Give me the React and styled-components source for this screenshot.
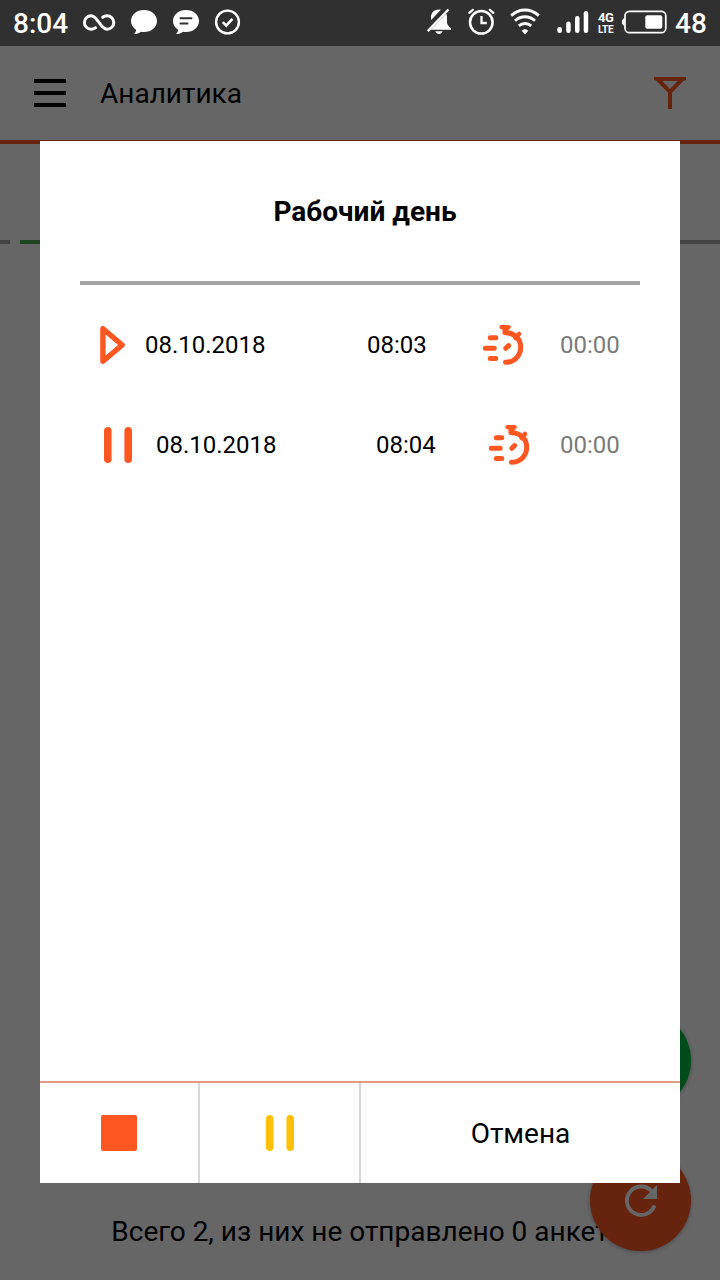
import React from "react";
import styled, { createGlobalStyle } from "styled-components";

const records = [
  {
    type: "play",
    date: "08.10.2018",
    time: "08:03",
    total: "00:00",
    columns: "65px 222px 115px 78px auto",
  },
  {
    type: "pause",
    date: "08.10.2018",
    time: "08:04",
    total: "00:00",
    columns: "76px 220px 112px 72px auto",
  },
];

function StatusIcons() {
  return (
    <Statusbar>
      <Clock>8:04</Clock>
      <Glyph width="48" height="46" viewBox="83 0 48 46">
        <path
          d="M95.5 27.8C93.6 29 92.6 29.300 91.200 29.300A6.800 6.800 0 0 1 91.200 15.700C97.500 15.700 100.500 29.300 107 29.300A6.800 6.800 0 0 0 107 15.700C105.200 15.700 104 16.300 102.700 17.300"
          fill="none"
          stroke="#fff"
          strokeWidth="3"
          strokeLinecap="round"
        />
      </Glyph>
      <Glyph width="42" height="46" viewBox="131 0 42 46">
        <path
          d="M144 10C151.500 10 157 14.800 157 21S151.500 32 144 32C142.900 32 142 31.900 141 31.700C139 33.300 136.800 34 134 34C135.500 32.800 136 31.500 136 29.800C133 27.800 131 24.700 131 21C131 14.800 136.500 10 144 10Z"
          fill="#fff"
        />
      </Glyph>
      <Glyph width="42" height="46" viewBox="173 0 42 46">
        <path
          d="M186 10C193.500 10 199 14.800 199 21S193.500 32 186 32C184.900 32 184 31.900 183 31.700C181 33.300 178.800 34 176 34C177.500 32.800 178 31.500 178 29.800C175 27.800 173 24.700 173 21C173 14.800 178.500 10 186 10Z"
          fill="#fff"
        />
        <path
          d="M180.500 18.200H191.500M180.500 23.400H187.500"
          stroke="#303030"
          strokeWidth="2"
          strokeLinecap="round"
        />
      </Glyph>
      <Glyph width="26" height="46" viewBox="215 0 26 46">
        <circle
          cx="227.500"
          cy="22"
          r="11.400"
          fill="none"
          stroke="#fff"
          strokeWidth="2.400"
        />
        <path
          d="M222.800 22.200L226.300 25.700L232.400 18.800"
          fill="none"
          stroke="#fff"
          strokeWidth="2.600"
        />
      </Glyph>
      <Spacer />
      <Glyph width="41" height="46" viewBox="427 0 41 46">
        <path
          d="M439 9.600C444.300 9.600 447 13.200 447 17.500V22C447 24.500 448.300 26.300 451 28.300V29.800H427V28.300C429.700 26.300 431 24.500 431 22V17.500C431 13.200 433.700 9.600 439 9.600Z"
          fill="#fff"
        />
        <path d="M435.300 31.300H442.700C442 33.300 440.800 34 439 34S436 33.300 435.300 31.300Z" fill="#fff" />
        <path d="M425 31.300L447 8" stroke="#303030" strokeWidth="6.500" />
        <path d="M427.800 31.200L448.500 9.500" stroke="#fff" strokeWidth="2.400" />
      </Glyph>
      <Glyph width="42" height="46" viewBox="468 0 42 46">
        <circle
          cx="481.300"
          cy="22.300"
          r="11.300"
          fill="none"
          stroke="#fff"
          strokeWidth="2.500"
        />
        <path
          d="M481.500 16V23H486.800"
          fill="none"
          stroke="#fff"
          strokeWidth="2.300"
        />
        <path
          d="M469.300 12.800L472.800 9.800M493.300 12.800L489.800 9.800"
          stroke="#fff"
          strokeWidth="2.200"
          strokeLinecap="round"
        />
      </Glyph>
      <Glyph width="47" height="46" viewBox="510 0 47 46">
        <path
          d="M511.200 15.600C519.500 8.100 530.500 8.100 538.800 15.600M515 20.800C521 15.400 529 15.400 535 20.800M518.800 25.900C522.400 22.700 527.600 22.700 531.200 25.900"
          fill="none"
          stroke="#fff"
          strokeWidth="2.800"
        />
        <path
          d="M525 34.500L521.700 30.800C523.400 28.700 526.600 28.700 528.300 30.800Z"
          fill="#fff"
        />
      </Glyph>
      <Glyph width="41" height="46" viewBox="557 0 41 46">
        <rect x="557.300" y="27" width="4.700" height="6" rx="2.300" fill="#fff" />
        <rect x="566.200" y="21.500" width="4.500" height="11.500" rx="2.200" fill="#fff" />
        <rect x="575" y="16" width="4.500" height="17" rx="2.200" fill="#fff" />
        <rect x="583.700" y="11" width="4.500" height="22" rx="2.200" fill="#fff" />
      </Glyph>
      <Network>
        <Generation>4G</Generation>
        <Lte>LTE</Lte>
      </Network>
      <Glyph width="53" height="46" viewBox="622 0 53 46">
        <rect
          x="625"
          y="11.300"
          width="40.800"
          height="21.400"
          rx="4.500"
          fill="none"
          stroke="#fff"
          strokeWidth="1.700"
        />
        <path d="M624.500 18C622.600 18.800 621.800 20.300 621.800 22S622.600 25.200 624.500 26Z" fill="#fff" />
        <rect x="645.300" y="15.300" width="17" height="13.400" rx="2" fill="#fff" />
      </Glyph>
      <Battery>48</Battery>
    </Statusbar>
  );
}

function PauseIcon({ color }) {
  return (
    <svg width="28" height="36" viewBox="0 0 28 36">
      <rect x="0" y="0" width="7.600" height="36" rx="3.800" fill={color} />
      <rect x="20.400" y="0" width="7.600" height="36" rx="3.800" fill={color} />
    </svg>
  );
}

function PlayIcon() {
  return (
    <svg width="26" height="40" viewBox="0 0 26 40">
      <path
        d="M2.900 3.700V36.300L22.200 20Z"
        fill="none"
        stroke="#ff5722"
        strokeWidth="5.400"
        strokeLinejoin="round"
      />
    </svg>
  );
}

function StopwatchIcon() {
  return (
    <svg width="42" height="42" viewBox="482 324 42 42">
      <g fill="none" stroke="#ff5722" strokeWidth="5" strokeLinecap="round">
        <path d="M490.300 337.700H495.800M485.300 348.300H494.200M490.300 358.500H495.800" />
        <path d="M505.300 332.700C514.500 332.700 520.700 339 520.700 347.300C520.700 355.600 514.300 362.300 505.500 362.300" />
        <path d="M515.500 338L519 334" strokeWidth="4.500" />
        <path d="M505.800 348.300L508.600 345.600" />
      </g>
      <path
        d="M501.500 325H508.500C511.800 325 511.400 329.400 508.500 329.500V334H502.500V329.500C498.500 329.400 498.500 325 501.500 325Z"
        fill="#ff5722"
      />
    </svg>
  );
}

function App() {
  return (
    <Screen>
      <GlobalStyle />
      <StatusIcons />
      <Page>
        <Header>
          <Burger>
            <Burgerline />
            <Burgerline />
            <Burgerline />
          </Burger>
          <Heading>Аналитика</Heading>
          <svg width="32" height="32" viewBox="0 0 32 32">
            <path
              d="M3.500 2H28.500L16 14.800ZM16 14V32"
              fill="none"
              stroke="#ff5722"
              strokeWidth="4"
            />
            <path d="M0 0H32V3L29 4H3L0 3Z" fill="#ff5722" />
          </svg>
        </Header>
        <Tabs>
          <Tabline $width="10px" $color="#aaa" />
          <Tabline $width="340px" $color="#4caf50" />
          <Tabline $color="#aaa" />
        </Tabs>
        <Summary>Всего 2, из них не отправлено 0 анкет</Summary>
        <Floating>
          <Fab $color="#00bc43" />
          <Fab $color="#ff5722">
            <svg width="34" height="34" viewBox="623 1183 34 34">
              <path
                d="M653.500 1204.500A14.200 14.200 0 1 1 650.500 1190"
                fill="none"
                stroke="#fff"
                strokeWidth="3.800"
              />
              <path d="M656 1184V1198H642Z" fill="#fff" />
            </svg>
          </Fab>
        </Floating>
      </Page>
      <Overlay>
        <Modal>
          <Title>Рабочий день</Title>
          <Records>
            {records.map((item) => (
              <Record key={item.time} $columns={item.columns}>
                <Typeicon $pause={item.type === "pause"}>
                  {item.type === "play" ? (
                    <PlayIcon />
                  ) : (
                    <PauseIcon color="#ff5722" />
                  )}
                </Typeicon>
                <Value>{item.date}</Value>
                <Value>{item.time}</Value>
                <StopwatchIcon />
                <Value $muted>{item.total}</Value>
              </Record>
            ))}
          </Records>
          <Actions>
            <Action>
              <Stop />
            </Action>
            <Action>
              <PauseIcon color="#ffc107" />
            </Action>
            <Action>Отмена</Action>
          </Actions>
        </Modal>
      </Overlay>
    </Screen>
  );
}

export default App;

const GlobalStyle = createGlobalStyle`
  * {
    box-sizing: border-box;
  }
  body {
    margin: 0;
    font-family: Roboto, sans-serif;
    color: #000;
  }
  svg {
    display: block;
    flex: none;
  }
`;
const Screen = styled.div`
  position: relative;
  width: 720px;
  height: 1280px;
  overflow: hidden;
  display: flex;
  flex-direction: column;
`;
const Statusbar = styled.div`
  height: 46px;
  flex: none;
  display: flex;
  align-items: center;
  background: #303030;
  color: #fff;
  font-size: 28px;
  font-weight: 500;
`;
const Clock = styled.div`
  width: 83px;
  padding-left: 13px;
`;
const Glyph = styled.svg`
  overflow: visible;
`;
const Spacer = styled.div`
  flex: 1;
`;
const Network = styled.div`
  width: 24px;
  display: flex;
  flex-direction: column;
  font-weight: 700;
`;
const Generation = styled.span`
  font-size: 13px;
  line-height: 13px;
  letter-spacing: -0.5px;
`;
const Lte = styled.span`
  font-size: 10px;
  line-height: 12px;
  letter-spacing: -0.2px;
`;
const Battery = styled.div`
  width: 45px;
`;
const Page = styled.div`
  flex: 1;
  display: flex;
  flex-direction: column;
  background: #fff;
`;
const Header = styled.header`
  height: 98px;
  display: flex;
  align-items: center;
  padding: 0 34px;
  border-bottom: 4px solid #ff5722;
`;
const Burger = styled.div`
  width: 32px;
  display: flex;
  flex-direction: column;
  gap: 8px;
`;
const Burgerline = styled.div`
  height: 4px;
  background: #000;
`;
const Heading = styled.h1`
  flex: 1;
  margin: 0 0 0 34px;
  font-size: 28px;
  font-weight: 400;
`;
const Tabs = styled.div`
  height: 100px;
  display: flex;
  align-items: flex-end;
  gap: 10px;
`;
const Tabline = styled.div`
  height: 4px;
  width: ${(props) => props.$width || "auto"};
  flex: ${(props) => (props.$width ? "none" : 1)};
  background: ${(props) => props.$color};
`;
const Summary = styled.div`
  margin-top: auto;
  height: 96px;
  line-height: 96px;
  font-size: 28px;
  text-align: center;
`;
const Floating = styled.div`
  position: absolute;
  right: 29px;
  bottom: 29px;
  display: flex;
  flex-direction: column;
  gap: 39px;
`;
const Fab = styled.div`
  width: 101px;
  height: 101px;
  border-radius: 50%;
  display: flex;
  align-items: center;
  justify-content: center;
  background: ${(props) => props.$color};
  box-shadow: 0 1px 4px rgba(0, 0, 0, 0.3);
`;
const Overlay = styled.div`
  position: absolute;
  inset: 46px 0 0;
  padding: 95px 40px 97px;
  display: flex;
  background: rgba(0, 0, 0, 0.6);
`;
const Modal = styled.section`
  flex: 1;
  display: flex;
  flex-direction: column;
  background: #fff;
`;
const Title = styled.h2`
  height: 144px;
  margin: 0 40px;
  padding-left: 10px;
  border-bottom: 4px solid #a4a4a4;
  font-size: 28px;
  font-weight: 700;
  line-height: 142px;
  text-align: center;
`;
const Records = styled.div`
  flex: 1;
  padding: 10px 40px 0;
`;
const Record = styled.div`
  height: 100px;
  display: grid;
  grid-template-columns: ${(props) => props.$columns};
  align-items: center;
`;
const Typeicon = styled.div`
  padding-left: ${(props) => (props.$pause ? "24px" : "20px")};
`;
const Value = styled.div`
  font-size: 24px;
  color: ${(props) => (props.$muted ? "#7b7b7b" : "#000")};
`;
const Actions = styled.footer`
  height: 102px;
  display: grid;
  grid-template-columns: 160px 161px 1fr;
  border-top: 2px solid #e29a84;
`;
const Action = styled.div`
  display: flex;
  align-items: center;
  justify-content: center;
  font-size: 28px;
  border-right: 2px solid #d6d6d6;

  &:last-child {
    border-right: none;
  }
`;
const Stop = styled.div`
  width: 36px;
  height: 36px;
  border-radius: 2px;
  background: #ff5722;
`;
